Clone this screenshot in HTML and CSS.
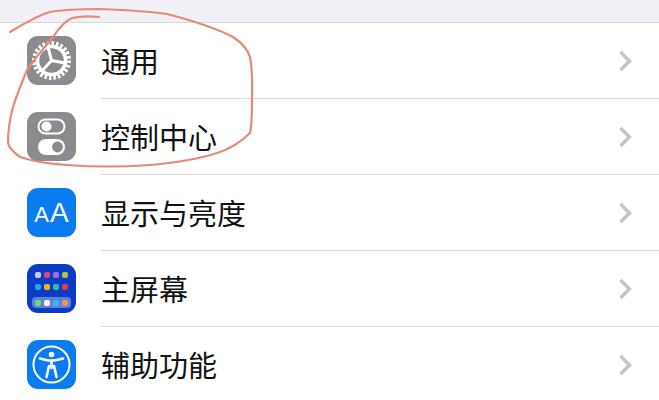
FILE: index.html
```html
<!DOCTYPE html>
<html lang="zh-CN">

<head>
    <meta charset="UTF-8">
    <title>设置</title>
    <link rel="stylesheet" href="styles.css">
</head>

<body>
    <div class="screen">
        <div class="topStrip"></div>
        <ul class="settingsList">
            <li class="row">
                <div class="icon gray">
                    <svg viewBox="0 0 49 49" width="49" height="49">
                        <circle cx="24.5" cy="24.5" r="17" fill="none" stroke="#fff" stroke-width="5" pathLength="48" stroke-dasharray="1.15 0.85"></circle>
                        <circle cx="24.5" cy="24.5" r="14" fill="none" stroke="#fff" stroke-width="3.6"></circle>
                        <path d="M24.5 24.5L21 11M24.5 24.5L38 27M24.5 24.5L15 35" fill="none" stroke="#fff" stroke-width="3"></path>
                    </svg>
                </div>
                <div class="rowBody">
                    <span class="label">通用</span>
                    <svg class="chevron" viewBox="0 0 14 22" width="14" height="22"><path d="M2.5 2L11.5 11L2.5 20" fill="none" stroke="#c2c2c5" stroke-width="3.4"></path></svg>
                </div>
            </li>
            <li class="row">
                <div class="icon gray">
                    <svg viewBox="0 0 49 49" width="49" height="49">
                        <rect x="11.5" y="7.5" width="26" height="14" rx="7" fill="none" stroke="#fff" stroke-width="2"></rect>
                        <circle cx="19.5" cy="14.5" r="5" fill="#fff"></circle>
                        <rect x="11" y="27" width="27" height="16" rx="8" fill="#fff"></rect>
                        <circle cx="30.5" cy="35" r="5.4" fill="#8a8a8f"></circle>
                    </svg>
                </div>
                <div class="rowBody">
                    <span class="label">控制中心</span>
                    <svg class="chevron" viewBox="0 0 14 22" width="14" height="22"><path d="M2.5 2L11.5 11L2.5 20" fill="none" stroke="#c2c2c5" stroke-width="3.4"></path></svg>
                </div>
            </li>
            <li class="row">
                <div class="icon blue aaIcon"><span class="aaSmall">A</span><span class="aaBig">A</span></div>
                <div class="rowBody">
                    <span class="label">显示与亮度</span>
                    <svg class="chevron" viewBox="0 0 14 22" width="14" height="22"><path d="M2.5 2L11.5 11L2.5 20" fill="none" stroke="#c2c2c5" stroke-width="3.4"></path></svg>
                </div>
            </li>
            <li class="row">
                <div class="icon navy homeIcon">
                    <div class="appGrid">
                        <i style="background:#c9c9e6"></i><i style="background:#e0457f"></i><i style="background:#a668e8"></i><i style="background:#b5c24a"></i>
                        <i style="background:#1fa8ee"></i><i style="background:#f0b41e"></i><i style="background:#1cc7a8"></i><i style="background:#e23a4e"></i>
                    </div>
                    <div class="dock">
                        <i style="background:#6fd67a"></i><i style="background:#fff"></i><i style="background:#35b4f2"></i><i style="background:#f0945a"></i>
                    </div>
                </div>
                <div class="rowBody">
                    <span class="label">主屏幕</span>
                    <svg class="chevron" viewBox="0 0 14 22" width="14" height="22"><path d="M2.5 2L11.5 11L2.5 20" fill="none" stroke="#c2c2c5" stroke-width="3.4"></path></svg>
                </div>
            </li>
            <li class="row">
                <div class="icon blue">
                    <svg viewBox="0 0 49 49" width="49" height="49">
                        <circle cx="24.5" cy="24.5" r="18" fill="none" stroke="#fff" stroke-width="2"></circle>
                        <circle cx="24.5" cy="14.5" r="2.8" fill="#fff"></circle>
                        <path d="M13 18.5L21.5 20.5H27.5L36 18.5M24.5 20.5V28M22 26L19.5 37M27 26L29.5 37" fill="none" stroke="#fff" stroke-width="2.6" stroke-linecap="round" stroke-linejoin="round"></path>
                    </svg>
                </div>
                <div class="rowBody">
                    <span class="label">辅助功能</span>
                    <svg class="chevron" viewBox="0 0 14 22" width="14" height="22"><path d="M2.5 2L11.5 11L2.5 20" fill="none" stroke="#c2c2c5" stroke-width="3.4"></path></svg>
                </div>
            </li>
        </ul>

        <!-- red pen circle drawn over the first two rows -->
        <svg class="penMark" viewBox="0 0 659 400" width="659" height="400">
            <path d="M10 32C22 25 36 16 50 12C66 9 84 9 100 9C124 10 146 11 167 14C190 20 214 27 233 37C242 43 248 50 250 57C253 72 252 86 252 100C252 112 252 124 250 133C240 143 230 149 217 153C196 160 172 163 150 165C122 167 94 167 67 165C50 164 32 161 20 157C13 152 9 148 8 143C8 130 10 118 13 107C17 94 22 82 27 70C35 58 45 47 53 37C59 28 65 21 72 18C81 16 90 16 99 17" fill="none" stroke="#e58a78" stroke-width="2.2" stroke-linecap="round"></path>
        </svg>
    </div>
</body>

</html>
```
FILE: styles.css
```css
html,
body {
    margin: 0;
    padding: 0;
}

body {
    width: 659px;
    height: 400px;
    overflow: hidden;
    background-color: #fff;
    font-family: "Noto Sans CJK SC", "Noto Sans", sans-serif;
}

.screen {
    position: relative;
    height: 400px;
    overflow: hidden;
}

.topStrip {
    height: 22px;
    background-color: #f0f0f6;
    border-bottom: 1px solid #d6d6da;
}

.settingsList {
    list-style: none;
    margin: 0;
    padding: 0;
}

.row {
    display: flex;
    align-items: stretch;
    height: 76px;
    padding-left: 27px;
}

.icon {
    flex: none;
    align-self: center;
    width: 49px;
    height: 49px;
    margin-top: -1px;
    border-radius: 11px;
    overflow: hidden;
}

.icon svg {
    display: block;
}

.gray {
    background-color: #8a8a8f;
}

.blue {
    background-color: #0a7cf0;
}

.navy {
    background-color: #0c3bc4;
}

.rowBody {
    flex: 1;
    display: flex;
    align-items: center;
    justify-content: space-between;
    margin-left: 25px;
    padding-right: 27px;
    border-bottom: 1px solid #d9d9dc;
}

.label {
    font-size: 29px;
    line-height: 1;
    color: #111;
}

.aaIcon {
    display: flex;
    align-items: baseline;
    justify-content: center;
    color: #fff;
    font-family: "Liberation Sans", sans-serif;
    line-height: 49px;
}

.aaSmall {
    font-size: 22px;
    margin-right: 1px;
}

.aaBig {
    font-size: 28px;
}

.homeIcon {
    display: flex;
    flex-direction: column;
    align-items: center;
    padding-top: 8px;
    box-sizing: border-box;
}

.appGrid {
    display: grid;
    grid-template-columns: repeat(4, 6px);
    gap: 6px 3px;
}

.appGrid i,
.dock i {
    display: block;
    width: 6px;
    height: 6px;
    border-radius: 2px;
}

.dock {
    display: flex;
    gap: 3px;
    justify-content: center;
    align-items: center;
    width: 39px;
    height: 11px;
    margin-top: 7px;
    border-radius: 4px;
    background-color: rgba(255, 255, 255, 0.35);
}

.penMark {
    position: absolute;
    top: 0;
    left: 0;
    pointer-events: none;
}
```
